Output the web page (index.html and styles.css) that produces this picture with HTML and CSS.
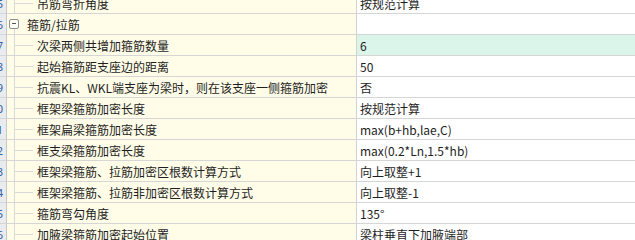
FILE: index.html
```html
<!DOCTYPE html>
<html lang="zh-CN">
<head>
<meta charset="utf-8">
<link rel="stylesheet" href="styles.css">
</head>
<body>
<div class="grid">
  <div class="rows">
    <div class="row">
      <div class="num"><span>25</span></div>
      <div class="name"><span class="tree"></span><span class="label">吊筋弯折角度</span></div>
      <div class="val">按规范计算</div>
    </div>
    <div class="row">
      <div class="num"><span>26</span></div>
      <div class="name group"><span class="expander"><span class="minus"></span></span><span class="label">箍筋/拉筋</span></div>
      <div class="val"></div>
    </div>
    <div class="row selected">
      <div class="num"><span>27</span></div>
      <div class="name"><span class="tree"></span><span class="label">次梁两侧共增加箍筋数量</span></div>
      <div class="val">6</div>
    </div>
    <div class="row">
      <div class="num"><span>28</span></div>
      <div class="name"><span class="tree"></span><span class="label">起始箍筋距支座边的距离</span></div>
      <div class="val">50</div>
    </div>
    <div class="row">
      <div class="num"><span>29</span></div>
      <div class="name"><span class="tree"></span><span class="label">抗震KL、WKL端支座为梁时，则在该支座一侧箍筋加密</span></div>
      <div class="val">否</div>
    </div>
    <div class="row">
      <div class="num"><span>30</span></div>
      <div class="name"><span class="tree"></span><span class="label">框架梁箍筋加密长度</span></div>
      <div class="val">按规范计算</div>
    </div>
    <div class="row">
      <div class="num"><span>31</span></div>
      <div class="name"><span class="tree"></span><span class="label">框架扁梁箍筋加密长度</span></div>
      <div class="val">max(b+hb,lae,C)</div>
    </div>
    <div class="row">
      <div class="num"><span>32</span></div>
      <div class="name"><span class="tree"></span><span class="label">框支梁箍筋加密长度</span></div>
      <div class="val">max(0.2*Ln,1.5*hb)</div>
    </div>
    <div class="row">
      <div class="num"><span>33</span></div>
      <div class="name"><span class="tree"></span><span class="label">框架梁箍筋、拉筋加密区根数计算方式</span></div>
      <div class="val">向上取整+1</div>
    </div>
    <div class="row">
      <div class="num"><span>34</span></div>
      <div class="name"><span class="tree"></span><span class="label">框架梁箍筋、拉筋非加密区根数计算方式</span></div>
      <div class="val">向上取整-1</div>
    </div>
    <div class="row">
      <div class="num"><span>35</span></div>
      <div class="name"><span class="tree"></span><span class="label">箍筋弯勾角度</span></div>
      <div class="val">135°</div>
    </div>
    <div class="row">
      <div class="num"><span>36</span></div>
      <div class="name"><span class="tree"></span><span class="label">加腋梁箍筋加密起始位置</span></div>
      <div class="val">梁柱垂直下加腋端部</div>
    </div>
  </div>
</div>
</body>
</html>
```

FILE: styles.css
```css
html, body {
  margin: 0;
  padding: 0;
  background: #ffffff;
}

.grid {
  width: 635px;
  height: 240px;
  overflow: hidden;
  font-family: "Noto Sans CJK SC", "Noto Sans", sans-serif;
  font-size: 12px;
  color: #1e1e1e;
}

.rows {
  margin-top: -7px;
}

.row {
  display: grid;
  grid-template-columns: 7px 350px 1fr;
  height: 21px;
}

.num,
.name,
.val {
  box-sizing: border-box;
  height: 21px;
  border-bottom: 1px solid #d6d6d6;
  display: flex;
  align-items: center;
  overflow: hidden;
  white-space: nowrap;
}

.num {
  background: #e9ebef;
  border-right: 1px solid #c6c8cc;
  justify-content: flex-end;
  color: #2f62a8;
  font-family: "Noto Sans", sans-serif;
  font-size: 11px;
}

.num span {
  flex: none;
  padding-right: 3px;
}

.name {
  background: #fffde8;
  border-right: 1px solid #d2d2d2;
}

.tree {
  flex: none;
  width: 30px;
  height: 20px;
  background-image:
    linear-gradient(#d9d9d9, #d9d9d9),
    linear-gradient(#d9d9d9, #d9d9d9);
  background-repeat: no-repeat;
  background-size: 1px 20px, 18px 1px;
  background-position: 7px 0, 8px 10px;
}

.group {
  background-image: linear-gradient(#d9d9d9, #d9d9d9);
  background-repeat: no-repeat;
  background-size: 1px 6px;
  background-position: 7px 14px;
}

.expander {
  flex: none;
  box-sizing: border-box;
  width: 10px;
  height: 10px;
  margin-left: 2px;
  margin-right: 8px;
  border: 1px solid #8e8e8e;
  border-radius: 2px;
  background: #fffef6;
  display: flex;
  align-items: center;
  justify-content: center;
  margin-top: -1px;
}

.minus {
  width: 4px;
  height: 1px;
  background: #555555;
}

.label {
  padding-left: 0;
}

.val {
  padding-left: 3px;
  background: #ffffff;
}

.selected .val {
  background: #dcf5ea;
}
```
